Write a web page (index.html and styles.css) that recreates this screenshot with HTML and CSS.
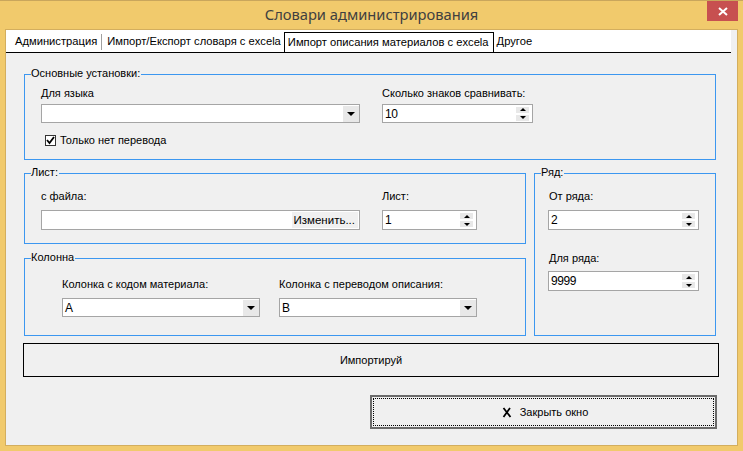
FILE: index.html
```html
<!DOCTYPE html>
<html lang="ru">
<head>
    <meta charset="UTF-8">
    <title>Словари администрирования</title>
    <link rel="stylesheet" href="styles.css">
</head>
<body>

<div class="window">
    <div class="titlebar">
        <span class="title">Словари администрирования</span>
        <span class="close-x">
            <svg width="10" height="9" viewBox="0 0 10 9"><path d="M1 1 L9 8 M9 1 L1 8" stroke="#fff" stroke-width="2"/></svg>
        </span>
    </div>

    <div class="client">
        <div class="tabs">
            <span class="tab first">Администрация</span>
            <span class="tab second">Импорт/Експорт словаря с excela</span>
            <span class="tab active">Импорт описания материалов с excela</span>
            <span class="tab last">Другое</span>
        </div>

        <div class="page">
            <div class="group g-main">
                <span class="legend">Основные установки:</span>
                <div class="field">
                    <label>Для языка</label>
                    <div class="combo"><span class="val"></span><span class="drop"><i class="tri-down"></i></span></div>
                </div>
                <div class="field">
                    <label>Сколько знаков сравнивать:</label>
                    <div class="spin"><span class="val">10</span><span class="arrows"><span><i class="tri-up"></i></span><span><i class="tri-sm"></i></span></span></div>
                </div>
                <div class="check-row">
                    <span class="checkbox">
                        <svg width="9" height="9" viewBox="0 0 9 9"><path d="M1 4 L3.5 7 L8 1" stroke="#000" stroke-width="1.8" fill="none"/></svg>
                    </span>
                    <span>Только нет перевода</span>
                </div>
            </div>

            <div class="row2">
                <div class="col-left">
                    <div class="group g-sheet">
                        <span class="legend">Лист:</span>
                        <div class="field">
                            <label>с файла:</label>
                            <div class="textbox"><span class="val"></span><span class="browse">Изменить...</span></div>
                        </div>
                        <div class="field">
                            <label>Лист:</label>
                            <div class="spin tall"><span class="val">1</span><span class="arrows"><span><i class="tri-up"></i></span><span><i class="tri-sm"></i></span></span></div>
                        </div>
                    </div>

                    <div class="group g-col">
                        <span class="legend">Колонна</span>
                        <div class="field">
                            <label>Колонка с кодом материала:</label>
                            <div class="combo"><span class="val">A</span><span class="drop"><i class="tri-down"></i></span></div>
                        </div>
                        <div class="field">
                            <label>Колонка с переводом описания:</label>
                            <div class="combo"><span class="val">B</span><span class="drop"><i class="tri-down"></i></span></div>
                        </div>
                    </div>
                </div>

                <div class="group g-rows">
                    <span class="legend">Ряд:</span>
                    <div class="field">
                        <label>От ряда:</label>
                        <div class="spin tall"><span class="val">2</span><span class="arrows"><span><i class="tri-up"></i></span><span><i class="tri-sm"></i></span></span></div>
                    </div>
                    <div class="field second-field">
                        <label>Для ряда:</label>
                        <div class="spin tall"><span class="val">9999</span><span class="arrows"><span><i class="tri-up"></i></span><span><i class="tri-sm"></i></span></span></div>
                    </div>
                </div>
            </div>

            <button class="btn-import">Импортируй</button>

            <button class="btn-close">
                <svg width="16" height="16" viewBox="0 0 16 16"><path d="M4.5 4 L11.5 13 M11 4 L4.5 13" stroke="#000" stroke-width="1.8" fill="none"/></svg>
                <span>Закрыть окно</span>
            </button>
        </div>
    </div>
</div>

</body>
</html>
```

FILE: styles.css
```css
* {
    box-sizing: border-box;
}
body {
    margin: 0;
    font-family: "Liberation Sans", Arial, sans-serif;
    font-size: 11px;
    color: #000;
}
.window {
    width: 743px;
    height: 451px;
    background: #f1ca6c;
    border-top: 1px solid #c9a65c;
    position: relative;
}
.titlebar {
    height: 28px;
    display: flex;
    align-items: center;
    justify-content: center;
    padding-bottom: 2px;
}
.title {
    font-family: "Noto Sans", sans-serif;
    font-size: 14.7px;
    color: #404040;
}
.close-x {
    position: absolute;
    top: 0;
    right: 5px;
    width: 31px;
    height: 20px;
    background: #c75050;
    display: flex;
    align-items: center;
    justify-content: center;
}
.client {
    margin-left: 5px;
    width: 733px;
    height: 417px;
    background: #f0f0f0;
    border: 1px solid #d3ae5e;
}

/* tabs */
.tabs {
    width: 725px;
    height: 23px;
    background: #fff;
    border-bottom: 1px solid #000;
    display: flex;
    align-items: flex-end;
    font-size: 11.2px;
}
.tab {
    height: 20px;
    line-height: 19px;
    padding: 0 4px 0 5px;
    white-space: nowrap;
}
.tab.first {
    padding-left: 9px;
    padding-right: 4px;
    border-right: 1px solid #a0a0a0;
    height: 16px;
    line-height: 15px;
    margin-bottom: 2px;
}
.tab.second {
    padding-left: 5px;
    padding-right: 3px;
}
.tab.active {
    border: 1px solid #000;
    border-bottom: none;
    padding: 0 4px 0 3px;
}
.tab.last {
    padding-left: 3px;
}

/* page */
.page {
    padding: 21px 0 0 18px;
}
.group {
    position: relative;
    border: 1px solid #3c97f0;
}
.legend {
    position: absolute;
    top: -8px;
    left: 6px;
    line-height: 13px;
    background: #f0f0f0;
    padding-right: 1px;
}
.field label {
    display: block;
    line-height: 13px;
    white-space: nowrap;
}
.val {
    flex: 1;
    padding-left: 2px;
    white-space: nowrap;
}

.g-main {
    width: 692px;
    height: 86px;
    padding: 12px 0 0 16px;
    display: grid;
    grid-template-columns: 319px 151px;
    column-gap: 22px;
    align-content: start;
}
.g-main label {
    margin-bottom: 4px;
}
.check-row {
    grid-column: 1 / 3;
    margin-top: 11px;
    padding-left: 4px;
    display: flex;
    align-items: center;
    gap: 4px;
    line-height: 13px;
}
.checkbox {
    width: 11px;
    height: 11px;
    border: 1px solid #333;
    background: #fff;
    display: flex;
    align-items: center;
    justify-content: center;
}

/* controls */
.combo, .spin, .textbox {
    height: 19px;
    border: 1px solid #a5a5a5;
    background: #fff;
    display: flex;
    align-items: center;
}
.spin.tall, .textbox {
    height: 20px;
}
.combo .val {
    font-size: 12px;
}
.drop {
    width: 16px;
    height: 16px;
    background: #e8e8e8;
    display: flex;
    align-items: center;
    justify-content: center;
}
.tri-down {
    width: 0;
    height: 0;
    border-left: 4px solid transparent;
    border-right: 4px solid transparent;
    border-top: 4px solid #000;
}
.spin .val {
    font-size: 12px;
    letter-spacing: -0.4px;
}
.arrows {
    width: 13px;
    margin-right: 3px;
    display: flex;
    flex-direction: column;
    gap: 2px;
}
.arrows span {
    height: 6px;
    background: #e8e8e8;
    display: flex;
    align-items: center;
    justify-content: center;
}
.tri-up {
    width: 0;
    height: 0;
    border-left: 3px solid transparent;
    border-right: 3px solid transparent;
    border-bottom: 3px solid #000;
}
.tri-sm {
    width: 0;
    height: 0;
    border-left: 3px solid transparent;
    border-right: 3px solid transparent;
    border-top: 3px solid #000;
}
.browse {
    height: 16px;
    line-height: 16px;
    margin-right: 1px;
    padding: 0 3px 0 2px;
    background: #f0f0f0;
    font-size: 11.5px;
}

.row2 {
    display: flex;
    gap: 8px;
    margin-top: 13px;
}
.col-left {
    display: flex;
    flex-direction: column;
    gap: 14px;
}
.g-sheet {
    width: 502px;
    height: 71px;
    padding: 16px 0 0 16px;
    display: grid;
    grid-template-columns: 319px 95px;
    column-gap: 22px;
    align-content: start;
}
.g-sheet label {
    margin-bottom: 7px;
}
.g-col {
    width: 502px;
    height: 78px;
    padding: 19px 0 0 37px;
    display: grid;
    grid-template-columns: 198px 198px;
    column-gap: 19px;
    align-content: start;
}
.g-col label {
    margin-bottom: 7px;
}
.g-rows {
    width: 182px;
    height: 163px;
    padding: 16px 0 0 13px;
}
.g-rows .field {
    width: 151px;
}
.g-rows label {
    margin-bottom: 7px;
    padding-left: 1px;
}
.g-rows .second-field {
    margin-top: 22px;
}
.g-rows .second-field label {
    margin-bottom: 6px;
}

/* buttons */
button {
    font-family: "Liberation Sans", Arial, sans-serif;
    font-size: 11px;
    color: #000;
    background: #f0f0f0;
}
.btn-import {
    display: block;
    width: 696px;
    height: 34px;
    margin: 7px 0 0 -1px;
    border: 1px solid #000;
}
.btn-close {
    width: 347px;
    height: 34px;
    margin: 18px 0 0 346px;
    border: 2px solid #6b6b6b;
    outline: 1px dotted #000;
    outline-offset: -4px;
    display: flex;
    align-items: center;
    justify-content: center;
    gap: 5px;
    padding: 0;
}
```
